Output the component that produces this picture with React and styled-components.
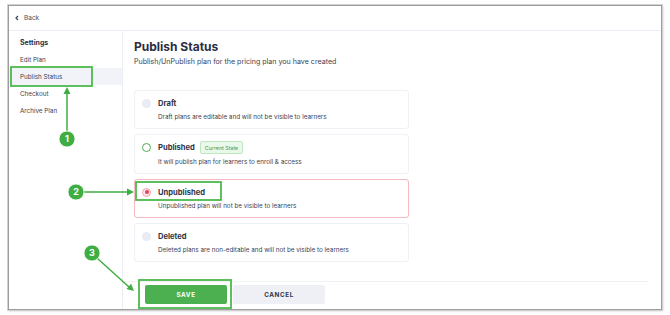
import React from "react";
import styled, { createGlobalStyle } from "styled-components";

const Global = createGlobalStyle`
  html, body { margin: 0; padding: 0; background: #ffffff; }
  body { font-family: Inter, "Noto Sans", sans-serif; color: #2e3347; }
  * { box-sizing: border-box; }
`;

const Page = styled.div`
  position: relative;
  width: 670px;
  height: 315px;
  padding: 5px 0 0 8px;
`;

const Frame = styled.div`
  width: 654px;
  height: 305px;
  border: 1px solid #9c9c9c;
  box-shadow: 0 0 0 1px #d2d2d2, 1px 1px 2px rgba(0, 0, 0, 0.25);
  background: #fff;
  display: flex;
  flex-direction: column;
`;

const Header = styled.div`
  height: 25px;
  flex: none;
  display: flex;
  align-items: center;
  gap: 4px;
  padding-left: 5px;
  border-bottom: 1px solid #eceef5;
  font-size: 6.5px;
  color: #4a4d5a;
`;

const Chevron = styled.svg`
  width: 6px;
  height: 6px;
`;

const Body = styled.div`
  flex: 1;
  display: flex;
  min-height: 0;
`;

const Sidebar = styled.nav`
  width: 114px;
  flex: none;
  border-right: 1px solid #eceef5;
  padding-top: 3px;
  display: flex;
  flex-direction: column;
`;

const NavItem = styled.div`
  height: 17px;
  display: flex;
  align-items: center;
  padding-left: 11px;
  font-size: ${(p) => (p.$head ? "7px" : "6.3px")};
  font-weight: ${(p) => (p.$head ? 700 : 400)};
  color: ${(p) => (p.$head ? "#2e3347" : "#3e4150")};
  background: ${(p) => (p.$active ? "#f1f3f8" : "transparent")};
`;

const Main = styled.main`
  flex: 1;
  display: flex;
  flex-direction: column;
`;

const Content = styled.section`
  flex: 1;
  padding: 8px 12px 0 11px;
`;

const Title = styled.h1`
  margin: 0;
  font-size: 12px;
  line-height: 16px;
  font-weight: 700;
  color: #2a2e42;
`;

const Subtitle = styled.p`
  margin: 2px 0 0;
  font-size: 7.1px;
  line-height: 10px;
  color: #3e4150;
`;

const Cards = styled.div`
  margin-top: 23px;
  width: 275px;
  display: flex;
  flex-direction: column;
  gap: 5px;
`;

const Card = styled.div`
  border: 1px solid ${(p) => (p.$selected ? "#f6b8c3" : "#f0f1f4")};
  border-radius: 3px;
  padding: 6px 10px 6px 7px;
  display: grid;
  grid-template-columns: 9px 1fr;
  column-gap: 7px;
  row-gap: 3px;
  align-items: center;
`;

const Radio = styled.span`
  width: 9px;
  height: 9px;
  border-radius: 50%;
  display: flex;
  align-items: center;
  justify-content: center;
  background: ${(p) =>
    p.$kind === "current" ? "#fff" : p.$kind === "selected" ? "#fde4e9" : "#e9ecf4"};
  border: ${(p) =>
    p.$kind === "current"
      ? "1.5px solid #4caf50"
      : p.$kind === "selected"
      ? "1px solid #f2a3b3"
      : "1px solid #e6e9f1"};
  &::after {
    content: "";
    display: ${(p) => (p.$kind === "selected" ? "block" : "none")};
    width: 4px;
    height: 4px;
    border-radius: 50%;
    background: #e2405c;
  }
`;

const TitleRow = styled.div`
  display: flex;
  align-items: center;
  gap: 5px;
  min-height: 12px;
`;

const CardTitle = styled.span`
  font-size: 7.6px;
  font-weight: 700;
  color: #2e3347;
`;

const Badge = styled.span`
  height: 13px;
  display: inline-flex;
  align-items: center;
  padding: 0 4px;
  border: 1px solid #bfe6c0;
  background: #eaf8ea;
  border-radius: 2px;
  font-size: 5.3px;
  color: #4d9a50;
`;

const Desc = styled.span`
  grid-column: 2;
  font-size: 6.3px;
  line-height: 10px;
  color: #3e4150;
`;

const Footer = styled.footer`
  flex: none;
  margin-right: 12px;
  border-top: 1px solid #f1f2f4;
  padding: 3px 0 5px 22px;
  display: flex;
  gap: 6px;
`;

const Button = styled.button`
  height: 19px;
  width: ${(p) => (p.$primary ? "82px" : "92px")};
  border: none;
  border-radius: 2px;
  background: ${(p) => (p.$primary ? "#4caf50" : "#eef0f6")};
  color: ${(p) => (p.$primary ? "#ffffff" : "#2e3347")};
  font-family: Inter, "Noto Sans", sans-serif;
  font-size: 6.3px;
  font-weight: 700;
  letter-spacing: 0.6px;
  padding: 0;
`;

const Overlay = styled.svg`
  position: absolute;
  left: 0;
  top: 0;
  width: 670px;
  height: 315px;
  pointer-events: none;
`;

const green = "#3fae42";

const options = [
  { title: "Draft", desc: "Draft plans are editable and will not be visible to learners", kind: "idle" },
  { title: "Published", desc: "It will publish plan for learners to enroll & access", kind: "current", badge: "Current State" },
  { title: "Unpublished", desc: "Unpublished plan will not be visible to learners", kind: "selected" },
  { title: "Deleted", desc: "Deleted plans are non-editable and will not be visible to learners", kind: "idle" },
];

function Marker({ cx, cy, n }) {
  return (
    <g>
      <circle cx={cx} cy={cy} r="8" fill={green} stroke="#fff" strokeWidth="0.8" />
      <text
        x={cx}
        y={cy + 3.2}
        textAnchor="middle"
        fontSize="9"
        fontWeight="700"
        fill="#fff"
        fontFamily="Inter, sans-serif"
      >
        {n}
      </text>
    </g>
  );
}

export default function App() {
  return (
    <Page>
      <Global />
      <Frame>
        <Header>
          <Chevron viewBox="0 0 6 6">
            <path d="M4 1 L2 3 L4 5" fill="none" stroke="#3e4150" strokeWidth="1.2" />
          </Chevron>
          <span>Back</span>
        </Header>
        <Body>
          <Sidebar>
            <NavItem $head>Settings</NavItem>
            <NavItem>Edit Plan</NavItem>
            <NavItem $active>Publish Status</NavItem>
            <NavItem>Checkout</NavItem>
            <NavItem>Archive Plan</NavItem>
          </Sidebar>
          <Main>
            <Content>
              <Title>Publish Status</Title>
              <Subtitle>Publish/UnPublish plan for the pricing plan you have created</Subtitle>
              <Cards>
                {options.map((o) => (
                  <Card key={o.title} $selected={o.kind === "selected"}>
                    <Radio $kind={o.kind} />
                    <TitleRow>
                      <CardTitle>{o.title}</CardTitle>
                      {o.badge && <Badge>{o.badge}</Badge>}
                    </TitleRow>
                    <Desc>{o.desc}</Desc>
                  </Card>
                ))}
              </Cards>
            </Content>
            <Footer>
              <Button $primary>SAVE</Button>
              <Button>CANCEL</Button>
            </Footer>
          </Main>
        </Body>
      </Frame>
      <Overlay viewBox="0 0 670 315">
        <g fill="none" stroke="#4cb84c" strokeWidth="1.8">
          <rect x="11" y="67" width="81" height="19" />
          <rect x="136" y="182" width="85" height="18" />
          <rect x="139" y="280" width="92" height="28" />
        </g>
        <g stroke={green} strokeWidth="1.5" fill={green}>
          <line x1="67" y1="131" x2="67" y2="92" />
          <polygon points="67,87 63.5,94 70.5,94" stroke="none" />
          <line x1="84" y1="192" x2="128" y2="192" />
          <polygon points="134,192 127,188.5 127,195.5" stroke="none" />
          <line x1="97" y1="258" x2="129" y2="287" />
          <polygon points="134,291 126.5,288.9 131.1,283.7" stroke="none" />
        </g>
        <Marker cx={67} cy={139} n="1" />
        <Marker cx={76} cy={192} n="2" />
        <Marker cx={92} cy={253} n="3" />
      </Overlay>
    </Page>
  );
}
